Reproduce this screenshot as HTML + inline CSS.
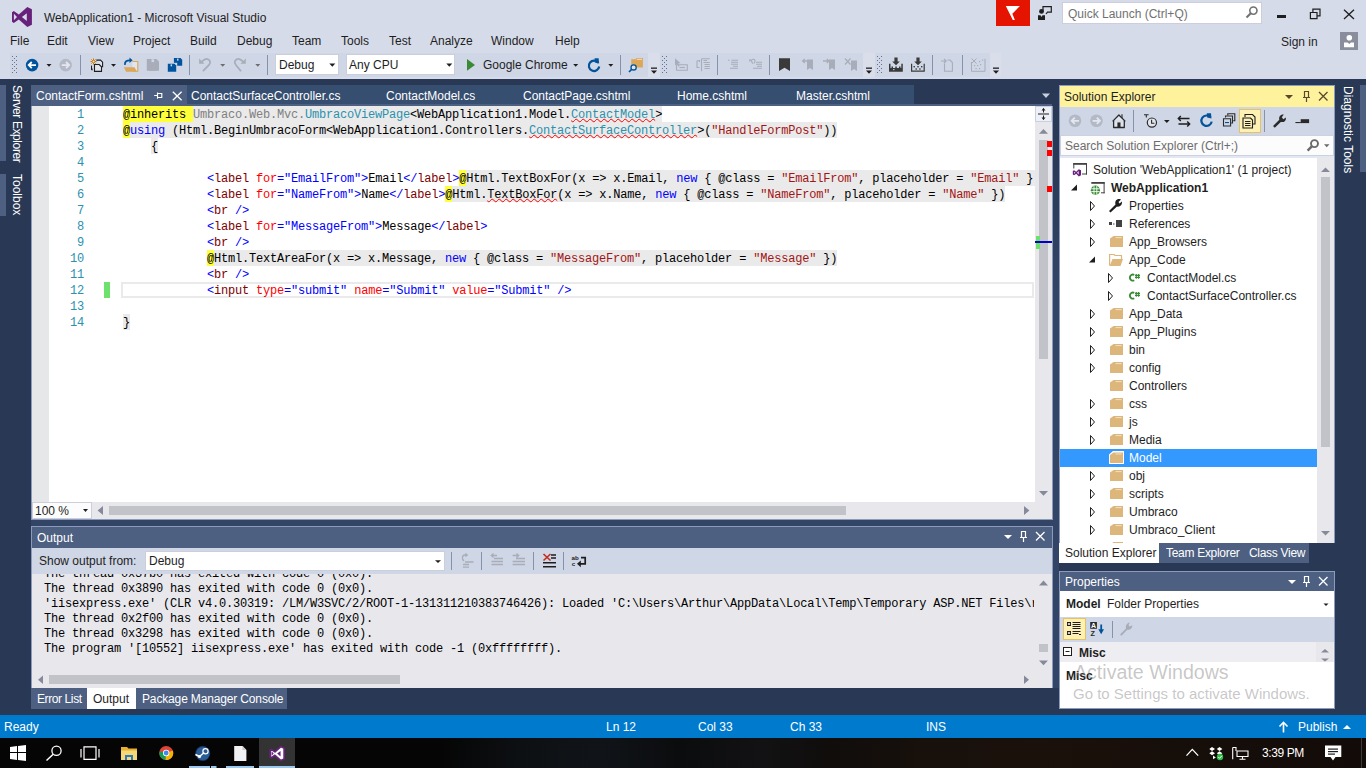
<!DOCTYPE html>
<html><head><meta charset="utf-8">
<style>
*{box-sizing:border-box}
html,body{margin:0;padding:0}
body{width:1366px;height:768px;overflow:hidden;position:relative;background:#293955;font-family:"Liberation Sans",sans-serif;font-size:12px;color:#1e1e1e}
.a{position:absolute;white-space:pre}
.t{position:absolute;white-space:pre;line-height:14px;height:14px}
.m{font-family:"Liberation Mono",monospace;font-size:12px;letter-spacing:-0.2px}
.cl{position:absolute;left:123px;height:16px;line-height:19px;white-space:pre;font-family:"Liberation Mono",monospace;font-size:12px;letter-spacing:-0.2px;color:#000}
.ln{position:absolute;left:56px;width:28px;text-align:right;height:16px;line-height:19px;font-family:"Liberation Mono",monospace;font-size:12px;letter-spacing:-0.2px;color:#2B91AF}
.b{color:#0000ff}.mr{color:#800000}.rd{color:#ff0000}.st{color:#a31515}.ty{color:#2B91AF}.gy{color:#808080}
.y{}
.sq{text-decoration:underline wavy #ff0000;text-decoration-thickness:1px;text-underline-offset:0px}
.ol{position:absolute;left:45px;height:15px;line-height:15px;white-space:pre;font-family:"Liberation Mono",monospace;font-size:12px;letter-spacing:-0.2px;color:#000}
.tr{position:absolute;height:18px;line-height:18px;white-space:pre}
</style></head><body>
<!-- top chrome -->
<div class="a" style="left:0;top:0;width:1366px;height:79px;background:#D6DBE9"></div>

<svg class="a" style="left:0;top:0" width="40" height="32" viewBox="0 0 40 32"><path fill="#68217A" fill-rule="evenodd" d="M27.3 7L31.9 9.3V24.8L27.3 27L18.8 19.4L13.8 22.9L12 21.8V12.2L13.8 11.1L18.8 14.6ZM13.9 13.8L17 17L13.9 20.3ZM26.8 13.2L21.9 17L26.8 21Z"/></svg>
<div class="t" style="left:44px;top:11px;color:#1e1e1e">WebApplication1 - Microsoft Visual Studio</div>
<div class="a" style="left:996px;top:0;width:34px;height:26px;background:#E51400"></div>
<svg class="a" style="left:990px;top:0" width="70" height="30" viewBox="990 0 70 30"><path fill="#fff" d="M1005.8 5.9H1019.9L1012.3 13.8L1014.9 19.9H1012.8Z"/><circle cx="1041.5" cy="11.4" r="2.4" fill="#1e1e1e"/><path fill="#1e1e1e" d="M1038 15.2H1040.5L1041.5 17L1042.5 15.2H1045V19.9H1038Z"/><path fill="none" stroke="#1e1e1e" stroke-width="1.2" d="M1043 11.5V6.6H1051.3V12.1H1047.5L1046 14"/></svg>
<div class="a" style="left:1062px;top:2px;width:200px;height:22px;background:#fff;border:1px solid #CCCEDB"></div>
<div class="t" style="left:1068px;top:7px;color:#717171">Quick Launch (Ctrl+Q)</div>
<svg class="a" style="left:1236px;top:0" width="130" height="56" viewBox="1236 0 130 56"><circle cx="1253.4" cy="10.6" r="3.6" fill="none" stroke="#717171" stroke-width="1.6"/><path stroke="#717171" stroke-width="2" d="M1250.8 13.2L1246.5 17.5"/>
<rect x="1277" y="15" width="9" height="3" fill="#1e1e1e"/>
<path fill="none" stroke="#1e1e1e" stroke-width="1.2" d="M1312.9 12.2V9.1H1320V15.8H1317M1310.4 12.5H1317V18.6H1310.4Z"/>
<path fill="none" stroke="#1e1e1e" stroke-width="1.3" d="M1344 9.8L1354 19M1354 9.8L1344 19"/>
<rect x="1340" y="32" width="18" height="18" fill="#8A8D9B"/><circle cx="1349.3" cy="37.8" r="2.8" fill="#fff"/><path fill="#fff" d="M1344 42.4H1347.5L1349.3 44L1351 42.4H1354V47.2H1344Z"/></svg>
<div class="t" style="left:1281px;top:35px">Sign in</div>

<div class="t" style="left:10px;top:34px">File</div><div class="t" style="left:47px;top:34px">Edit</div><div class="t" style="left:88px;top:34px">View</div><div class="t" style="left:133px;top:34px">Project</div><div class="t" style="left:190px;top:34px">Build</div><div class="t" style="left:237px;top:34px">Debug</div><div class="t" style="left:292px;top:34px">Team</div><div class="t" style="left:341px;top:34px">Tools</div><div class="t" style="left:389px;top:34px">Test</div><div class="t" style="left:430px;top:34px">Analyze</div><div class="t" style="left:491px;top:34px">Window</div><div class="t" style="left:555px;top:34px">Help</div>
<div class="a" style="left:10px;top:53px;width:638px;height:24px;background:#CFD6E5"></div>
<div class="a" style="left:648px;top:53px;width:12px;height:24px;background:#D9DEEA"></div>
<div class="a" style="left:660px;top:53px;width:203px;height:24px;background:#CFD6E5"></div>
<div class="a" style="left:863px;top:53px;width:12px;height:24px;background:#D9DEEA"></div>
<div class="a" style="left:875px;top:53px;width:115px;height:24px;background:#CFD6E5"></div>
<div class="a" style="left:990px;top:53px;width:11px;height:24px;background:#D9DEEA"></div>
<svg class="a" style="left:0;top:48px" width="1010" height="32" viewBox="0 48 1010 32">
<g fill="#64708C"><rect x="12" y="56" width="1" height="1"/><rect x="16" y="56" width="1" height="1"/><rect x="12" y="60" width="1" height="1"/><rect x="16" y="60" width="1" height="1"/><rect x="12" y="64" width="1" height="1"/><rect x="16" y="64" width="1" height="1"/><rect x="12" y="68" width="1" height="1"/><rect x="16" y="68" width="1" height="1"/><rect x="12" y="72" width="1" height="1"/><rect x="16" y="72" width="1" height="1"/><rect x="14" y="58" width="1" height="1"/><rect x="14" y="62" width="1" height="1"/><rect x="14" y="66" width="1" height="1"/><rect x="14" y="70" width="1" height="1"/></g>
<circle cx="32.1" cy="65.1" r="6.3" fill="#00539C"/><path fill="none" stroke="#fff" stroke-width="1.8" d="M36 65.1H29M31.8 62L28.7 65.1L31.8 68.2"/>
<path fill="#1e1e1e" d="M46.5 64H51.5L49.0 66.8Z"/>
<circle cx="65.7" cy="65.1" r="6.3" fill="#B4B9C6"/><path fill="none" stroke="#E4E7EF" stroke-width="1.8" d="M61.8 65.1H68.8M66 62L69.1 65.1L66 68.2"/>
<rect x="80" y="55" width="1" height="20" fill="#8592AC"/>
<path fill="#E0E3EC" stroke="#1e1e1e" stroke-width="1.1" d="M96.3 60.1H100.5L102.6 62.2V67.2"/>
<path fill="#E2E5EE" stroke="#1e1e1e" stroke-width="1.1" d="M94.5 64.5H99.2L101.5 66.8V71.4H94.5Z"/>
<path stroke="#1e1e1e" stroke-width="1" d="M91.5 65.6V69.8H92.6"/>
<g stroke="#CC7A00" stroke-width="1"><path d="M93.5 58.5V64.5M90.5 61.5H96.5M91.4 59.4L95.6 63.6M95.6 59.4L91.4 63.6"/></g><circle cx="93.5" cy="61.5" r="1.3" fill="#E0E3EC" stroke="#CC7A00" stroke-width="0.8"/>
<path fill="#1e1e1e" d="M111 64H116L113.5 66.8Z"/>
<path fill="#E2E5EE" stroke="#DCA758" stroke-width="1.1" d="M132.4 61.5H137.8V71.3H132.4"/>
<path fill="#DCA758" d="M124 67.2H134.5L137 71.8H126Z"/>
<path fill="none" stroke="#00539C" stroke-width="1.8" d="M125 64.8C124.5 61.5 127 60.2 130 60.3"/><path fill="#00539C" d="M129.5 57.5L132.6 60.3L129.5 63Z"/>
<path fill="#A8ADB9" d="M146.8 58.9H156.5L159 61.4V70.7H146.8Z"/><rect x="151.5" y="59.3" width="2.6" height="2.8" fill="#CFD6E5"/><rect x="149" y="65" width="7.8" height="5.7" fill="#A8ADB9"/>
<path fill="#00539C" d="M173.9 58.1H180.5L182.2 59.8V65.7H173.9Z"/><rect x="177" y="58.6" width="1.5" height="2" fill="#CFD6E5"/>
<path fill="#CFD6E5" d="M166.8 62.8H177.2V72.8H166.8Z"/>
<path fill="#00539C" d="M167.8 63.8H174.5L176.2 65.5V71.8H167.8Z"/><rect x="170.6" y="64.3" width="1.5" height="2" fill="#CFD6E5"/>
<rect x="189" y="55" width="1" height="20" fill="#8592AC"/>
<path fill="none" stroke="#A8ADB9" stroke-width="1.8" d="M202.9 71.2L209 65C211.5 62.2 209.5 58.8 206.5 58.8C204.6 58.8 203.2 60.2 201.8 61.6"/><path fill="#A8ADB9" d="M199.1 58.5V63.8H204.5Z"/>
<path fill="#6D6D6D" d="M220.2 64H225.2L222.7 66.8Z"/>
<path fill="none" stroke="#A8ADB9" stroke-width="1.8" d="M241 71.2L235.9 65C233.4 62.2 235.4 58.8 238.4 58.8C240.3 58.8 241.7 60.2 243.1 61.6"/><path fill="#A8ADB9" d="M245.8 58.5V63.8H240.4Z"/>
<path fill="#6D6D6D" d="M255.3 64H260.3L257.8 66.8Z"/>
<rect x="267" y="55" width="1" height="20" fill="#8592AC"/>
<path fill="#388A34" d="M467 59L475 65L467 70.8Z"/>
<path fill="#1e1e1e" d="M573.2 64H578.2L575.7 66.8Z"/>
<path fill="none" stroke="#00539C" stroke-width="2.2" d="M598.3 62.8A5.2 5.2 0 1 0 599.2 66.5"/><path fill="#00539C" d="M594.6 58.2L598.6 58.2L599.1 63.6L594.8 62.5Z"/>
<path fill="#1e1e1e" d="M608.3 64H613.3L610.8 66.8Z"/>
<rect x="620" y="55" width="1" height="20" fill="#8592AC"/>
<path fill="#DCA758" d="M631.2 59.2H635.5L636.5 58H642.9V67.6H631.2Z"/><rect x="636.8" y="58.8" width="5.2" height="1" fill="#F0F0F0" opacity="0.8"/>
<circle cx="633.6" cy="67.4" r="2.6" fill="#E2E5EE" stroke="#00539C" stroke-width="1.3"/><path stroke="#00539C" stroke-width="1.6" d="M631.6 69.4L629 72"/>
<g fill="#1e1e1e"><rect x="651" y="67.5" width="6" height="1.3"/><path d="M651 70.5H657L654 73.8Z"/></g>
<g fill="#64708C"><rect x="662" y="56" width="1" height="1"/><rect x="666" y="56" width="1" height="1"/><rect x="662" y="60" width="1" height="1"/><rect x="666" y="60" width="1" height="1"/><rect x="662" y="64" width="1" height="1"/><rect x="666" y="64" width="1" height="1"/><rect x="662" y="68" width="1" height="1"/><rect x="666" y="68" width="1" height="1"/><rect x="662" y="72" width="1" height="1"/><rect x="666" y="72" width="1" height="1"/><rect x="664" y="58" width="1" height="1"/><rect x="664" y="62" width="1" height="1"/><rect x="664" y="66" width="1" height="1"/><rect x="664" y="70" width="1" height="1"/></g>
<g fill="none" stroke="#A8ADB9" stroke-width="1.1"><path d="M676.5 64.8H687.3V70.2H676.5Z" /><path d="M679.5 67.5H685"/></g><path fill="#A8ADB9" d="M675 58.2V65.5L677 63.8L678.5 66.8L679.5 66.3L678.2 63.3H680.6Z"/>
<g fill="none" stroke="#A8ADB9" stroke-width="1.1"><path d="M701.5 58.8V71.2M701.5 58.8H709.8M703.5 60.5H707M703.5 62.5H709.8M704.5 64.5H709.8M704.5 66.5H709.8M704.5 68.5H709.8M697 60.8V67.5H699.5M697 60.8H699.5M699.5 60V62"/></g>
<rect x="717" y="55" width="1" height="20" fill="#8592AC"/>
<g fill="none" stroke="#A8ADB9" stroke-width="1.1"><path d="M728 60.3H729.5M731.5 60.3H738M731 62.3H738M731 64.3H738M733 66.3H738M730 68.3H738"/></g>
<g fill="none" stroke="#A8ADB9" stroke-width="1.1"><path d="M753 63.5C751 62 751 59 753.5 59.2C755.5 59.4 755.5 61.5 753.8 63.5M756 62.3H762M756 64.3H762M757 66.3H762M753 68.3H762"/></g><path fill="#A8ADB9" d="M749.3 59V62L752 60Z"/>
<rect x="769" y="55" width="1" height="20" fill="#8592AC"/>
<path fill="#3A3A3A" d="M779 58.2H790V71L784.5 67.8L779 71Z"/>
<path fill="#A8ADB9" d="M807 59.5H813V70L810 68L807 70Z"/><path fill="none" stroke="#A8ADB9" stroke-width="1.3" d="M808.5 61H802.8M804.8 59L802.6 61L804.8 63"/>
<path fill="#A8ADB9" d="M829 59.5H835V70L832 68L829 70Z"/><path fill="none" stroke="#A8ADB9" stroke-width="1.3" d="M823 61H828.8M826.8 59L829 61L826.8 63"/>
<path fill="#A8ADB9" d="M851 60.5H857V71L854 69L851 71Z"/><path fill="none" stroke="#A8ADB9" stroke-width="1.3" d="M845 58.5L850.5 64.5M850.5 58.5L845 64.5"/>
<g fill="#1e1e1e"><rect x="866" y="67.5" width="6" height="1.3"/><path d="M866 70.5H872L869 73.8Z"/></g>
<g fill="#64708C"><rect x="877" y="56" width="1" height="1"/><rect x="881" y="56" width="1" height="1"/><rect x="877" y="60" width="1" height="1"/><rect x="881" y="60" width="1" height="1"/><rect x="877" y="64" width="1" height="1"/><rect x="881" y="64" width="1" height="1"/><rect x="877" y="68" width="1" height="1"/><rect x="881" y="68" width="1" height="1"/><rect x="877" y="72" width="1" height="1"/><rect x="881" y="72" width="1" height="1"/><rect x="879" y="58" width="1" height="1"/><rect x="879" y="62" width="1" height="1"/><rect x="879" y="66" width="1" height="1"/><rect x="879" y="70" width="1" height="1"/></g>
<g fill="#3A3A3A"><path d="M894.4 57.5H897.6V61.5H899.8L896 65.3L892.2 61.5H894.4Z"/><path d="M889 63.8H890.5V68H901.3V63.8H902.8V71.8H889Z"/><rect x="891.5" y="66.5" width="1.5" height="1.5"/><rect x="895.3" y="66.5" width="1.5" height="1.5"/><rect x="899" y="66.5" width="1.5" height="1.5"/><rect x="893.2" y="69" width="1.2" height="1.2" fill="#CFD6E5"/></g>
<g fill="#3A3A3A"><path d="M916.4 57.5H919.6V61.5H921.8L918 65.3L914.2 61.5H916.4Z"/><path d="M911 63.8H912.2V70.6H923.6V63.8H924.8V71.8H911Z"/><rect x="913.5" y="66" width="1.4" height="1.4"/><rect x="917.3" y="66" width="1.4" height="1.4"/><rect x="921" y="66" width="1.4" height="1.4"/><rect x="915.5" y="68.3" width="1.4" height="1.4"/><rect x="919.2" y="68.3" width="1.4" height="1.4"/></g>
<rect x="932" y="55" width="1" height="20" fill="#8592AC"/>
<g fill="none" stroke="#A8ADB9" stroke-width="1.1"><path d="M944.5 63.5V71.2H952.4V62.5L950 60H947.5"/><path d="M941 61H946M944 59L946.2 61L944 63"/></g>
<rect x="962" y="55" width="1" height="20" fill="#8592AC"/>
<g fill="none" stroke="#A8ADB9" stroke-width="1"><path d="M971.5 62V71.3H985V58.8"/><path d="M971.5 58.5L976.5 63.5M976.5 58.5L971.5 63.5"/></g><g fill="#A8ADB9"><rect x="979" y="61" width="1.2" height="1.2"/><rect x="982" y="59.5" width="1.2" height="1.2"/><rect x="974" y="65" width="1.2" height="1.2"/><rect x="977" y="65" width="1.2" height="1.2"/><rect x="980" y="64" width="1.2" height="1.2"/><rect x="975.5" y="68" width="1.2" height="1.2"/><rect x="979" y="68" width="1.2" height="1.2"/></g>
<g fill="#1e1e1e"><rect x="993" y="67.5" width="6" height="1.3"/><path d="M993 70.5H999L996 73.8Z"/></g>
</svg>
<div class="a" style="left:275px;top:54px;width:64px;height:21px;background:#fff;border:1px solid #CCCEDB"></div>
<div class="t" style="left:279px;top:58px">Debug</div><svg class="a" style="left:329px;top:63px" width="7" height="5"><path fill="#1e1e1e" d="M0.3 0.5H6.3L3.3 3.8Z"/></svg>
<div class="a" style="left:346px;top:54px;width:109px;height:21px;background:#fff;border:1px solid #CCCEDB"></div>
<div class="t" style="left:349px;top:58px">Any CPU</div><svg class="a" style="left:446px;top:63px" width="7" height="5"><path fill="#1e1e1e" d="M0.3 0.5H6.3L3.3 3.8Z"/></svg>
<div class="t" style="left:483px;top:58px">Google Chrome</div>

<div class="a" style="left:0;top:85px;width:6px;height:76px;background:#4D6082"></div>
<div class="a" style="left:0;top:174px;width:6px;height:42px;background:#4D6082"></div>
<div class="a" style="left:11px;top:85px;width:14px;height:76px;"><div class="t" style="left:0;top:0;transform-origin:0 0;transform:translate(13px,0) rotate(90deg);color:#fff;letter-spacing:-0.4px">Server Explorer</div></div>
<div class="a" style="left:11px;top:174px;width:14px;height:42px;"><div class="t" style="left:0;top:0;transform-origin:0 0;transform:translate(13px,0) rotate(90deg);color:#fff">Toolbox</div></div>
<div class="a" style="left:1360px;top:85px;width:6px;height:87px;background:#4D6082"></div>
<div class="a" style="left:1342px;top:86px;width:14px;height:87px;"><div class="t" style="left:0;top:0;transform-origin:0 0;transform:translate(13px,0) rotate(90deg);color:#fff">Diagnostic Tools</div></div>

<div class="a" style="left:31px;top:85px;width:156px;height:21px;background:#4D6082"></div>
<div class="a" style="left:187px;top:85px;width:727px;height:19px;background:#364E6F"></div>
<div class="a" style="left:31px;top:104px;width:1021px;height:2px;background:#4D6082"></div>
<div class="t" style="left:36px;top:89px;color:#fff">ContactForm.cshtml</div>
<svg class="a" style="left:150px;top:88px" width="36" height="16" viewBox="150 88 36 16"><path fill="none" stroke="#fff" stroke-width="1.1" d="M154.2 95.5H157.5M157.5 92.4V98.7M157.5 93.5H161.8V97.5H157.5"/><path fill="none" stroke="#fff" stroke-width="1.3" d="M172.8 91.8L181.6 100.2M181.6 91.8L172.8 100.2"/></svg>
<div class="t" style="left:191px;top:89px;color:#fff">ContactSurfaceController.cs</div>
<div class="t" style="left:386px;top:89px;color:#fff">ContactModel.cs</div>
<div class="t" style="left:523px;top:89px;color:#fff">ContactPage.cshtml</div>
<div class="t" style="left:677px;top:89px;color:#fff">Home.cshtml</div>
<div class="t" style="left:796px;top:89px;color:#fff">Master.cshtml</div>
<svg class="a" style="left:1040px;top:92px" width="12" height="8"><path fill="#C9CEDB" d="M2 1.5H10L6 6Z"/></svg>
<div class="a" style="left:31px;top:106px;width:1021px;height:413px;background:#fff"></div>
<div class="a" style="left:31px;top:106px;width:18px;height:396px;background:#E6E7E8"></div>
<div class="a" style="left:123px;top:106px;width:70px;height:16px;background:#FFFF3A"></div>
<div class="a" style="left:193px;top:106px;width:469px;height:16px;background:#EAEAEA"></div>
<div class="a" style="left:123px;top:122px;width:7px;height:16px;background:#FFFF3A"></div>
<div class="a" style="left:130px;top:122px;width:707px;height:16px;background:#EAEAEA"></div>
<div class="a" style="left:151px;top:138px;width:7px;height:16px;background:#EAEAEA"></div>
<div class="a" style="left:459px;top:170px;width:7px;height:16px;background:#FFFF3A"></div>
<div class="a" style="left:466px;top:170px;width:569px;height:16px;background:#EAEAEA"></div>
<div class="a" style="left:445px;top:186px;width:7px;height:16px;background:#FFFF3A"></div>
<div class="a" style="left:452px;top:186px;width:553px;height:16px;background:#EAEAEA"></div>
<div class="a" style="left:207px;top:250px;width:7px;height:16px;background:#FFFF3A"></div>
<div class="a" style="left:214px;top:250px;width:623px;height:16px;background:#EAEAEA"></div>
<div class="a" style="left:123px;top:314px;width:7px;height:16px;background:#EAEAEA"></div>
<div class="a" style="left:121px;top:282px;width:913px;height:16px;border:2px solid #EAEAEA"></div>
<div class="a" style="left:104px;top:282px;width:6px;height:16px;background:#6CE26C"></div>
<div class="ln" style="top:106px">1</div>
<div class="ln" style="top:122px">2</div>
<div class="ln" style="top:138px">3</div>
<div class="ln" style="top:154px">4</div>
<div class="ln" style="top:170px">5</div>
<div class="ln" style="top:186px">6</div>
<div class="ln" style="top:202px">7</div>
<div class="ln" style="top:218px">8</div>
<div class="ln" style="top:234px">9</div>
<div class="ln" style="top:250px">10</div>
<div class="ln" style="top:266px">11</div>
<div class="ln" style="top:282px">12</div>
<div class="ln" style="top:298px">13</div>
<div class="ln" style="top:314px">14</div>
<div class="a" style="left:123px;top:106px;width:912px;height:396px;overflow:hidden">
<div class="cl" style="left:0;top:0px">@inherits <span class="gy">Umbraco.Web.Mvc.</span><span class="ty">UmbracoViewPage</span>&lt;WebApplication1.Model.<span class="ty sq">ContactModel</span>&gt;</div>
<div class="cl" style="left:0;top:16px">@<span class="b">using</span> (Html.BeginUmbracoForm&lt;WebApplication1.Controllers.<span class="ty sq">ContactSurfaceController</span>&gt;(<span class="st">"HandleFormPost"</span>))</div>
<div class="cl" style="left:0;top:32px">    {</div>
<div class="cl" style="left:0;top:64px">            <span class="b">&lt;</span><span class="mr">label</span> <span class="rd">for</span><span class="b">=</span><span class="b">"EmailFrom"</span><span class="b">&gt;</span>Email<span class="b">&lt;/</span><span class="mr">label</span><span class="b">&gt;</span>@Html.TextBoxFor(x =&gt; x.Email, <span class="b">new</span> { @class = <span class="st">"EmailFrom"</span>, placeholder = <span class="st">"Email"</span> })</div>
<div class="cl" style="left:0;top:80px">            <span class="b">&lt;</span><span class="mr">label</span> <span class="rd">for</span><span class="b">=</span><span class="b">"NameFrom"</span><span class="b">&gt;</span>Name<span class="b">&lt;/</span><span class="mr">label</span><span class="b">&gt;</span>@Html.<span class="sq">TextBoxFor</span>(x =&gt; x.Name, <span class="b">new</span> { @class = <span class="st">"NameFrom"</span>, placeholder = <span class="st">"Name"</span> })</div>
<div class="cl" style="left:0;top:96px">            <span class="b">&lt;</span><span class="mr">br</span><span class="b"> /&gt;</span></div>
<div class="cl" style="left:0;top:112px">            <span class="b">&lt;</span><span class="mr">label</span> <span class="rd">for</span><span class="b">=</span><span class="b">"MessageFrom"</span><span class="b">&gt;</span>Message<span class="b">&lt;/</span><span class="mr">label</span><span class="b">&gt;</span></div>
<div class="cl" style="left:0;top:128px">            <span class="b">&lt;</span><span class="mr">br</span><span class="b"> /&gt;</span></div>
<div class="cl" style="left:0;top:144px">            @Html.TextAreaFor(x =&gt; x.Message, <span class="b">new</span> { @class = <span class="st">"MessageFrom"</span>, placeholder = <span class="st">"Message"</span> })</div>
<div class="cl" style="left:0;top:160px">            <span class="b">&lt;</span><span class="mr">br</span><span class="b"> /&gt;</span></div>
<div class="cl" style="left:0;top:176px">            <span class="b">&lt;</span><span class="mr">input</span> <span class="rd">type</span><span class="b">=</span><span class="b">"submit"</span> <span class="rd">name</span><span class="b">=</span><span class="b">"Submit"</span> <span class="rd">value</span><span class="b">=</span><span class="b">"Submit"</span><span class="b"> /&gt;</span></div>
<div class="cl" style="left:0;top:208px">}</div>
</div>
<div class="a" style="left:1035px;top:106px;width:17px;height:396px;background:#E8E8EC"></div>
<div class="a" style="left:1035px;top:106px;width:17px;height:16px;background:#EEF0F8;border:1px solid #C9D0E2"></div>
<svg class="a" style="left:1035px;top:106px" width="17" height="16"><path fill="none" stroke="#1e1e1e" stroke-width="1" d="M3 8H14M8.5 2.5V6.5M8.5 9.5V13.5"/><path fill="#1e1e1e" d="M6.5 4.5L8.5 2L10.5 4.5ZM6.5 11.5L8.5 14L10.5 11.5Z"/></svg>
<svg class="a" style="left:1035px;top:122px" width="17" height="380" viewBox="1035 122 17 380"><path fill="#868999" d="M1039 133.8L1043.5 129L1048 133.8Z"/><path fill="#868999" d="M1039 491L1043.5 495.8L1048 491Z"/></svg>
<div class="a" style="left:1039px;top:140px;width:9px;height:219px;background:#C2C3C9"></div>
<div class="a" style="left:1047px;top:141px;width:5px;height:6px;background:#ff0000"></div>
<div class="a" style="left:1047px;top:150px;width:5px;height:6px;background:#ff0000"></div>
<div class="a" style="left:1047px;top:186px;width:5px;height:6px;background:#ff0000"></div>
<div class="a" style="left:1036px;top:236px;width:4px;height:13px;background:#6CE26C"></div>
<div class="a" style="left:1035px;top:241px;width:17px;height:2px;background:#0000CD"></div>
<div class="a" style="left:31px;top:502px;width:1021px;height:17px;background:#E8E8EC"></div>
<div class="a" style="left:31px;top:106px;width:1px;height:414px;background:#8C9BB9"></div>
<div class="a" style="left:1052px;top:106px;width:1px;height:414px;background:#8C9BB9"></div>
<div class="a" style="left:31px;top:519px;width:1022px;height:1px;background:#8C9BB9"></div>

<div class="a" style="left:32px;top:502px;width:60px;height:17px;background:#FCFCFC;border:1px solid #CCCEDB"></div>
<div class="t" style="left:35px;top:504px">100 %</div>
<svg class="a" style="left:80px;top:507px" width="10" height="8"><path fill="#1e1e1e" d="M3 2H8L5.5 5Z"/></svg>
<svg class="a" style="left:95px;top:502px" width="940" height="17" viewBox="95 502 940 17"><path fill="#868999" d="M103 506L97.6 510.5L103 515Z"/><path fill="#868999" d="M1024 506L1029.4 510.5L1024 515Z"/></svg>
<div class="a" style="left:109px;top:506px;width:737px;height:9px;background:#C2C3C9"></div>
<div class="a" style="left:31px;top:520px;width:1022px;height:6px;background:#334567"></div>
<div class="a" style="left:1053px;top:150px;width:6px;height:538px;background:linear-gradient(180deg,#293955 0px,#334567 150px,#334567 100%)"></div>
<div class="a" style="left:31px;top:526px;width:1022px;height:162px;background:#E8E8EC;border:1px solid #8C9BB9;border-bottom:none"></div>
<div class="a" style="left:32px;top:527px;width:1020px;height:21px;background:#4D6082"></div>
<div class="t" style="left:37px;top:531px;color:#fff">Output</div>
<svg class="a" style="left:1002px;top:530px" width="50" height="14" viewBox="1002 530 50 14"><path fill="#fff" d="M1004 535H1012L1008 539Z"/><path fill="none" stroke="#fff" stroke-width="1.2" d="M1021.5 531.5H1025.5V537.5H1021.5Z M1020 537.5H1027M1023.5 537.5V542"/><path fill="none" stroke="#fff" stroke-width="1.3" d="M1036 532L1044.5 540.5M1044.5 532L1036 540.5"/></svg>
<div class="a" style="left:32px;top:548px;width:1020px;height:26px;background:#CFD6E5"></div>
<div class="t" style="left:39px;top:554px">Show output from:</div>
<div class="a" style="left:145px;top:551px;width:300px;height:20px;background:#fff;border:1px solid #CCCEDB"></div>
<div class="t" style="left:149px;top:554px">Debug</div>
<svg class="a" style="left:430px;top:550px" width="170" height="24" viewBox="430 550 170 24">
<path fill="#1e1e1e" d="M435 560.2H441L438 563Z"/>
<g fill="#8592AC"><rect x="451" y="552" width="1" height="18"/><rect x="481" y="552" width="1" height="18"/><rect x="533" y="552" width="1" height="18"/><rect x="563" y="552" width="1" height="18"/></g>
<g fill="none" stroke="#A8ADB9" stroke-width="1.3"><path d="M464 561C461.5 559 462 555 465 555L467 555M465.5 553.5L467.2 555L465.5 556.6M465 562H473.5M463 564.5H469M463 567.2H469"/>
<path d="M497 555.5H491.5M493.5 553.5L491.3 555.5L493.5 557.5M494 558.5H503M491.5 561.5H503M491.5 564.5H503"/>
<path d="M512.6 555.5H518.5M516.5 553.5L518.7 555.5L516.5 557.5M516 558.5H525M512.6 561.5H525M512.6 564.5H525"/></g>
<g fill="none" stroke="#1e1e1e" stroke-width="1.6"><path d="M551 555H556M551 558H556M543 562.8H556M543 566.7H556"/></g><path fill="none" stroke="#C42B1C" stroke-width="1.6" d="M543.5 554L550.5 560.5M550.5 554L543.5 560.5"/>
<g fill="#1e1e1e" font-family="Liberation Sans" font-size="6.2" font-weight="bold"><text x="571.6" y="560">ab</text><text x="571.8" y="566">c</text></g>
<path fill="none" stroke="#1e1e1e" stroke-width="1.7" d="M581 557.6H585.2V563.8H579.5"/><path fill="#1e1e1e" d="M580.8 560.4L577 563.8L580.8 567.2Z"/>
</svg>
<div class="a" style="left:32px;top:574px;width:1003px;height:100px;overflow:hidden"><div class="a" style="left:-1px;top:2px;width:1003px;height:100px">
<div class="ol" style="left:13px;top:-9px;width:990px;overflow:hidden">The thread 0x37b0 has exited with code 0 (0x0).</div>
<div class="ol" style="left:13px;top:6px;width:990px;overflow:hidden">The thread 0x3890 has exited with code 0 (0x0).</div>
<div class="ol" style="left:13px;top:21px;width:990px;overflow:hidden">'iisexpress.exe' (CLR v4.0.30319: /LM/W3SVC/2/ROOT-1-131311210383746426): Loaded 'C:\Users\Arthur\AppData\Local\Temp\Temporary ASP.NET Files\root\</div>
<div class="ol" style="left:13px;top:36px;width:990px;overflow:hidden">The thread 0x2f00 has exited with code 0 (0x0).</div>
<div class="ol" style="left:13px;top:51px;width:990px;overflow:hidden">The thread 0x3298 has exited with code 0 (0x0).</div>
<div class="ol" style="left:13px;top:66px;width:990px;overflow:hidden">The program '[10552] iisexpress.exe' has exited with code -1 (0xffffffff).</div>
</div></div>
<svg class="a" style="left:32px;top:574px" width="1020" height="114" viewBox="32 574 1020 114">
<path fill="#868999" d="M1039 585.4L1043.5 580.6L1048 585.4Z"/><rect x="1039" y="644" width="9" height="8" fill="#C2C3C9"/><path fill="#868999" d="M1039 660.5L1043.5 665.3L1048 660.5Z"/>
<path fill="#868999" d="M43 675.5L38 679.8L43 684Z"/><path fill="#868999" d="M1024 675.5L1029 679.8L1024 684Z"/>
<rect x="49" y="675" width="351" height="9" fill="#C2C3C9"/></svg>
<div class="a" style="left:31px;top:688px;width:56px;height:21px;background:#4D6082"></div>
<div class="a" style="left:87px;top:688px;width:49px;height:21px;background:#fff"></div>
<div class="a" style="left:136px;top:688px;width:151px;height:21px;background:#4D6082"></div>
<div class="t" style="left:37px;top:692px;color:#fff;letter-spacing:-0.4px">Error List</div>
<div class="t" style="left:93px;top:692px;color:#1e1e1e">Output</div>
<div class="t" style="left:142px;top:692px;color:#fff;letter-spacing:-0.15px">Package Manager Console</div>
<div class="a" style="left:1059px;top:85px;width:276px;height:478px;background:#fff;border:1px solid #8C9BB9;border-bottom:none"></div>
<div class="a" style="left:1060px;top:86px;width:274px;height:21px;background:#FFF29D"></div>
<div class="t" style="left:1064px;top:90px;color:#1e1e1e">Solution Explorer</div>
<svg class="a" style="left:1283px;top:90px" width="50" height="14" viewBox="1283 91 50 14"><path fill="#574A2C" d="M1285 96H1293L1289 100Z"/><path fill="none" stroke="#574A2C" stroke-width="1.2" d="M1304.5 92.5H1308.5V98.5H1304.5Z M1303 98.5H1310M1306.5 98.5V103"/><path fill="none" stroke="#574A2C" stroke-width="1.3" d="M1319 93L1327.5 101.5M1327.5 93L1319 101.5"/></svg>
<div class="a" style="left:1060px;top:107px;width:274px;height:29px;background:#CFD6E5"></div>
<svg class="a" style="left:1060px;top:107px" width="274" height="29" viewBox="1060 107 274 29">
<circle cx="1075" cy="120.8" r="6.3" fill="#B4B9C6"/><path fill="none" stroke="#E4E7EF" stroke-width="1.8" d="M1079 120.8H1072M1074.8 117.7L1071.7 120.8L1074.8 123.9"/>
<circle cx="1096.5" cy="120.8" r="6.3" fill="#B4B9C6"/><path fill="none" stroke="#E4E7EF" stroke-width="1.8" d="M1092.6 120.8H1099.6M1096.8 117.7L1099.9 120.8L1096.8 123.9"/>
<path fill="#E2E5EE" stroke="#2a2a2a" stroke-width="1.3" stroke-linejoin="round" d="M1112.6 121.4L1118.9 115L1125.3 121.4M1113.6 120.5V127.5H1124.3V120.5"/><path stroke="#2a2a2a" stroke-width="1.1" d="M1122 114.2V118"/><rect x="1117.4" y="122.4" width="3.1" height="5.3" fill="#2a2a2a"/>
<rect x="1133" y="110" width="1" height="22" fill="#8592AC"/>
<circle cx="1151.9" cy="122.6" r="4.6" fill="#E2E5EE" stroke="#2a2a2a" stroke-width="1.2"/><path fill="none" stroke="#2a2a2a" stroke-width="1.1" d="M1151.6 119.8V123.2H1154.4M1144 114.8H1148.6M1146.3 114.8V117.5"/>
<path fill="#1e1e1e" d="M1164 120H1169.6L1166.8 123Z"/>
<g fill="none" stroke="#1e1e1e" stroke-width="1.4"><path d="M1178.5 118.5H1189.5M1180.8 116L1178.3 118.5L1180.8 121M1178.5 124H1189.5M1187.2 121.5L1189.7 124L1187.2 126.5"/></g>
<path fill="none" stroke="#00539C" stroke-width="2.2" d="M1210.5 117.3A5.2 5.2 0 1 0 1211.7 121.6"/><path fill="#00539C" d="M1206.8 113.2L1211 113.3L1211.5 118.6L1207.2 117.6Z"/>
<g fill="none" stroke="#2a2a2a" stroke-width="1.1"><path d="M1225.5 117.5V116H1232.5V123H1231.2M1227.8 115.3V113.8H1234.8V120.8H1233.2"/><path d="M1223.5 118.8H1230.6V126H1223.5Z"/></g><rect x="1225" y="122" width="4" height="1.1" fill="#00539C"/>
<rect x="1239.5" y="109.5" width="21" height="23" fill="#FFF0B3" stroke="#E5C365" stroke-width="1"/>
<g fill="none" stroke="#1e1e1e" stroke-width="1.1"><path d="M1245 117V114.5H1252.5L1255 117V124H1252"/><path d="M1243 118H1250.5L1252.5 120V128H1243Z"/><path d="M1245 121.5H1250.5M1245 123.5H1250.5M1245 125.5H1250.5"/></g>
<rect x="1264" y="110" width="1" height="22" fill="#8592AC"/>
<path fill="#2a2a2a" d="M1273 126L1279.3 119.7C1278.5 117 1280.5 114.2 1283.8 114.6L1281.8 117.2L1283.3 119.2L1285.9 117.4C1286.4 120.8 1283.5 122.8 1280.8 121.9L1274.8 127.8Z"/>
<rect x="1295.4" y="122" width="5.4" height="1.1" fill="#2a2a2a"/><rect x="1300.7" y="119.2" width="8.4" height="3.9" fill="#2a2a2a"/>
</svg>
<div class="a" style="left:1060px;top:136px;width:274px;height:22px;background:#E3E7F1"></div>
<div class="a" style="left:1060px;top:135px;width:274px;height:21px;background:#fcfcfc;border:1px solid #CCD1E0"></div>
<div class="t" style="left:1065px;top:139px;color:#6D6D6D">Search Solution Explorer (Ctrl+;)</div>
<svg class="a" style="left:1300px;top:136px" width="34" height="20" viewBox="1300 136 34 20"><circle cx="1314.5" cy="143.6" r="3.5" fill="none" stroke="#6A6A6A" stroke-width="1.9"/><path stroke="#6A6A6A" stroke-width="2.4" d="M1311.8 146.3L1307.6 150.6"/><path fill="#6A6A6A" d="M1324 144.2H1329.5L1326.75 147.2Z"/></svg>
<div class="a" style="left:1060px;top:158px;width:257px;height:385px;overflow:hidden">
<div class="a" style="left:0;top:291px;width:257px;height:18px;background:#3399FF"></div>
<div class="t" style="left:33px;top:5px;color:#1e1e1e">Solution 'WebApplication1' (1 project)</div>
<div class="t" style="left:51px;top:23px;color:#1e1e1e;font-weight:bold">WebApplication1</div>
<div class="t" style="left:69px;top:41px;color:#1e1e1e">Properties</div>
<div class="t" style="left:69px;top:59px;color:#1e1e1e">References</div>
<div class="t" style="left:69px;top:77px;color:#1e1e1e">App_Browsers</div>
<div class="t" style="left:69px;top:95px;color:#1e1e1e">App_Code</div>
<div class="t" style="left:87px;top:113px;color:#1e1e1e">ContactModel.cs</div>
<div class="t" style="left:87px;top:131px;color:#1e1e1e">ContactSurfaceController.cs</div>
<div class="t" style="left:69px;top:149px;color:#1e1e1e">App_Data</div>
<div class="t" style="left:69px;top:167px;color:#1e1e1e">App_Plugins</div>
<div class="t" style="left:69px;top:185px;color:#1e1e1e">bin</div>
<div class="t" style="left:69px;top:203px;color:#1e1e1e">config</div>
<div class="t" style="left:69px;top:221px;color:#1e1e1e">Controllers</div>
<div class="t" style="left:69px;top:239px;color:#1e1e1e">css</div>
<div class="t" style="left:69px;top:257px;color:#1e1e1e">js</div>
<div class="t" style="left:69px;top:275px;color:#1e1e1e">Media</div>
<div class="t" style="left:69px;top:293px;color:#fff">Model</div>
<div class="t" style="left:69px;top:311px;color:#1e1e1e">obj</div>
<div class="t" style="left:69px;top:329px;color:#1e1e1e">scripts</div>
<div class="t" style="left:69px;top:347px;color:#1e1e1e">Umbraco</div>
<div class="t" style="left:69px;top:365px;color:#1e1e1e">Umbraco_Client</div>
<svg class="a" style="left:0;top:0" width="257" height="385" viewBox="1060 158 257 385"><g fill="#424242"><rect x="1073.3" y="163" width="13.7" height="1.8"/><rect x="1073.3" y="163" width="1" height="6.5"/><rect x="1086" y="163" width="1" height="11.5"/><rect x="1082" y="173.5" width="5" height="1"/></g><rect x="1072.5" y="168.5" width="9.5" height="8.5" fill="#fff"/><path fill="#68217A" fill-rule="evenodd" d="M1078.8 169.2L1081 170.3V175.3L1078.8 176.4L1076.2 173.8L1074 175.3L1072.8 174.6V171L1074 170.3L1076.2 171.8ZM1074.2 171.8L1075.4 172.8L1074.2 173.8ZM1078.6 171L1077.1 172.8L1078.6 174.6Z"/><path fill="#1e1e1e" d="M1077 184.5V190.5H1071Z"/><g fill="#424242"><rect x="1091.3" y="182" width="13.3" height="1.8"/><rect x="1103.6" y="182" width="1" height="11.3"/><rect x="1101" y="192.3" width="3.6" height="1"/></g><circle cx="1095.4" cy="190.2" r="5.2" fill="#fff"/><circle cx="1095.4" cy="190.2" r="4.6" fill="#388A34"/><path fill="none" stroke="#fff" stroke-width="0.9" d="M1091.2 188.8H1099.6M1091.2 191.6H1099.6M1094 185.8V194.6M1096.8 185.8V194.6"/><path fill="none" stroke="#1e1e1e" stroke-width="1" d="M1090.5 201.5L1094.5 206L1090.5 210.5Z"/><path fill="#1e1e1e" d="M1109 211L1115.5 204.5C1114.5 201 1117 198 1121 199.5L1118.5 202L1119.5 203.5L1122 201.5C1122.5 205 1119.5 207.5 1117 206.5L1110.5 212.5Z"/><path fill="none" stroke="#1e1e1e" stroke-width="1" d="M1090.5 219.5L1094.5 224L1090.5 228.5Z"/><rect x="1109" y="222" width="3" height="3" fill="#424242"/><rect x="1113" y="223.5" width="1.5" height="1" fill="#424242"/><rect x="1116" y="220" width="6" height="7" fill="#424242"/><path fill="none" stroke="#1e1e1e" stroke-width="1" d="M1090.5 237.5L1094.5 242L1090.5 246.5Z"/><path fill="#DCB67A" d="M1110.0 238.5L1113.5 236.0H1123.0V247.0H1110.0Z"/><rect x="1115.5" y="237.2" width="6.2" height="0.9" fill="#F5E6C8"/><path fill="#1e1e1e" d="M1095 256.5V262.5H1089Z"/><path fill="none" stroke="#DCB67A" stroke-width="1.2" d="M1109.6 265.5V254.5H1114L1115 255.5H1121.5V259"/><path fill="#DCB67A" d="M1109.6 266L1112.5 259H1123L1120.5 266Z"/><path fill="none" stroke="#1e1e1e" stroke-width="1" d="M1108.5 273.5L1112.5 278L1108.5 282.5Z"/><path fill="none" stroke="#388A34" stroke-width="1.9" d="M1134.2 275.0A2.9 3 0 1 0 1134.2 280.2"/><path fill="none" stroke="#388A34" stroke-width="1.1" d="M1136.3 274.0V278.8M1138.6 274.0V278.8M1135.0 275.4H1140.0M1135.0 277.4H1140.0"/><path fill="none" stroke="#1e1e1e" stroke-width="1" d="M1108.5 291.5L1112.5 296L1108.5 300.5Z"/><path fill="none" stroke="#388A34" stroke-width="1.9" d="M1134.2 293.0A2.9 3 0 1 0 1134.2 298.2"/><path fill="none" stroke="#388A34" stroke-width="1.1" d="M1136.3 292.0V296.8M1138.6 292.0V296.8M1135.0 293.4H1140.0M1135.0 295.4H1140.0"/><path fill="none" stroke="#1e1e1e" stroke-width="1" d="M1090.5 309.5L1094.5 314L1090.5 318.5Z"/><path fill="#DCB67A" d="M1110.0 310.5L1113.5 308.0H1123.0V319.0H1110.0Z"/><rect x="1115.5" y="309.2" width="6.2" height="0.9" fill="#F5E6C8"/><path fill="none" stroke="#1e1e1e" stroke-width="1" d="M1090.5 327.5L1094.5 332L1090.5 336.5Z"/><path fill="#DCB67A" d="M1110.0 328.5L1113.5 326.0H1123.0V337.0H1110.0Z"/><rect x="1115.5" y="327.2" width="6.2" height="0.9" fill="#F5E6C8"/><path fill="none" stroke="#1e1e1e" stroke-width="1" d="M1090.5 345.5L1094.5 350L1090.5 354.5Z"/><path fill="#DCB67A" d="M1110.0 346.5L1113.5 344.0H1123.0V355.0H1110.0Z"/><rect x="1115.5" y="345.2" width="6.2" height="0.9" fill="#F5E6C8"/><path fill="none" stroke="#1e1e1e" stroke-width="1" d="M1090.5 363.5L1094.5 368L1090.5 372.5Z"/><path fill="#DCB67A" d="M1110.0 364.5L1113.5 362.0H1123.0V373.0H1110.0Z"/><rect x="1115.5" y="363.2" width="6.2" height="0.9" fill="#F5E6C8"/><path fill="#DCB67A" d="M1110.0 382.5L1113.5 380.0H1123.0V391.0H1110.0Z"/><rect x="1115.5" y="381.2" width="6.2" height="0.9" fill="#F5E6C8"/><path fill="none" stroke="#1e1e1e" stroke-width="1" d="M1090.5 399.5L1094.5 404L1090.5 408.5Z"/><path fill="#DCB67A" d="M1110.0 400.5L1113.5 398.0H1123.0V409.0H1110.0Z"/><rect x="1115.5" y="399.2" width="6.2" height="0.9" fill="#F5E6C8"/><path fill="none" stroke="#1e1e1e" stroke-width="1" d="M1090.5 417.5L1094.5 422L1090.5 426.5Z"/><path fill="#DCB67A" d="M1110.0 418.5L1113.5 416.0H1123.0V427.0H1110.0Z"/><rect x="1115.5" y="417.2" width="6.2" height="0.9" fill="#F5E6C8"/><path fill="none" stroke="#1e1e1e" stroke-width="1" d="M1090.5 435.5L1094.5 440L1090.5 444.5Z"/><path fill="#DCB67A" d="M1110.0 436.5L1113.5 434.0H1123.0V445.0H1110.0Z"/><rect x="1115.5" y="435.2" width="6.2" height="0.9" fill="#F5E6C8"/><path fill="#fff" d="M1109.0 454.5L1113.0 451.0H1124.0V464.0H1109.0Z"/><path fill="#DCB67A" d="M1110.0 455.0L1113.5 452.5H1123.0V463.0H1110.0Z"/><rect x="1115.5" y="453.5" width="6.2" height="0.9" fill="#F5E6C8"/><path fill="none" stroke="#1e1e1e" stroke-width="1" d="M1090.5 471.5L1094.5 476L1090.5 480.5Z"/><path fill="#DCB67A" d="M1110.0 472.5L1113.5 470.0H1123.0V481.0H1110.0Z"/><rect x="1115.5" y="471.2" width="6.2" height="0.9" fill="#F5E6C8"/><path fill="none" stroke="#1e1e1e" stroke-width="1" d="M1090.5 489.5L1094.5 494L1090.5 498.5Z"/><path fill="#DCB67A" d="M1110.0 490.5L1113.5 488.0H1123.0V499.0H1110.0Z"/><rect x="1115.5" y="489.2" width="6.2" height="0.9" fill="#F5E6C8"/><path fill="none" stroke="#1e1e1e" stroke-width="1" d="M1090.5 507.5L1094.5 512L1090.5 516.5Z"/><path fill="#DCB67A" d="M1110.0 508.5L1113.5 506.0H1123.0V517.0H1110.0Z"/><rect x="1115.5" y="507.2" width="6.2" height="0.9" fill="#F5E6C8"/><path fill="none" stroke="#1e1e1e" stroke-width="1" d="M1090.5 525.5L1094.5 530L1090.5 534.5Z"/><path fill="#DCB67A" d="M1110.0 526.5L1113.5 524.0H1123.0V535.0H1110.0Z"/><rect x="1115.5" y="525.2" width="6.2" height="0.9" fill="#F5E6C8"/><path fill="none" stroke="#1e1e1e" stroke-width="1" d="M1090.5 543.5L1094.5 548L1090.5 552.5Z"/><path fill="#DCB67A" d="M1110.0 544.5L1113.5 542.0H1123.0V553.0H1110.0Z"/><rect x="1115.5" y="543.2" width="6.2" height="0.9" fill="#F5E6C8"/></svg>
</div>
<div class="a" style="left:1317px;top:158px;width:17px;height:385px;background:#E8E8EC"></div>
<svg class="a" style="left:1317px;top:158px" width="17" height="385" viewBox="1317 158 17 385"><path fill="#868999" d="M1321 172L1325.5 167.5L1330 172Z"/><rect x="1321" y="177" width="9" height="270" fill="#C2C3C9"/><path fill="#868999" d="M1321 531L1325.5 535.5L1330 531Z"/></svg>
<div class="a" style="left:1059px;top:543px;width:276px;height:20px;background:#293955"></div>
<div class="a" style="left:1059px;top:543px;width:100px;height:20px;background:#fff"></div>
<div class="a" style="left:1159px;top:543px;width:150px;height:20px;background:#4D6082"></div>
<div class="t" style="left:1065px;top:546px">Solution Explorer</div>
<div class="t" style="left:1166px;top:546px;color:#fff;letter-spacing:-0.3px">Team Explorer</div>
<div class="t" style="left:1249px;top:546px;color:#fff;letter-spacing:-0.3px">Class View</div>
<div class="a" style="left:1059px;top:571px;width:276px;height:138px;background:#fff;border:1px solid #8C9BB9"></div>
<div class="a" style="left:1060px;top:572px;width:274px;height:19px;background:#4D6082"></div>
<div class="t" style="left:1065px;top:575px;color:#fff">Properties</div>
<svg class="a" style="left:1286px;top:575px" width="50" height="14" viewBox="1286 575 50 14"><path fill="#fff" d="M1288 580H1296L1292 584Z"/><path fill="none" stroke="#fff" stroke-width="1.2" d="M1304.5 576.5H1308.5V582.5H1304.5Z M1303 582.5H1310M1306.5 582.5V587"/><path fill="none" stroke="#fff" stroke-width="1.3" d="M1319 577L1327.5 585.5M1327.5 577L1319 585.5"/></svg>
<div class="t" style="left:1066px;top:597px;font-weight:bold">Model</div>
<div class="t" style="left:1107px;top:597px">Folder Properties</div>
<svg class="a" style="left:1320px;top:600px" width="12" height="8"><path fill="#1e1e1e" d="M3.5 3.5H8.5L6 6Z"/></svg>
<div class="a" style="left:1060px;top:617px;width:274px;height:25px;background:#CFD6E5"></div>
<svg class="a" style="left:1060px;top:617px" width="274" height="45" viewBox="1060 617 274 45">
<rect x="1063.5" y="618.5" width="22" height="21" fill="#FFF0B3" stroke="#E5C365"/>
<g fill="#1e1e1e"><rect x="1067" y="622" width="4" height="4"/><rect x="1067" y="631" width="4" height="4"/><rect x="1072.5" y="622" width="8" height="1"/><rect x="1072.5" y="624" width="8" height="1"/><rect x="1072.5" y="626" width="8" height="1"/><rect x="1072.5" y="628" width="8" height="1"/><rect x="1072.5" y="631" width="8" height="1"/><rect x="1072.5" y="633" width="6" height="1"/><rect x="1079" y="634" width="2" height="1"/></g>
<g fill="#fff"><rect x="1068.5" y="623" width="1" height="2"/><rect x="1067.8" y="623.5" width="2.4" height="1"/><rect x="1068.5" y="632" width="1" height="2"/><rect x="1067.8" y="632.5" width="2.4" height="1"/></g>
<rect x="1090.2" y="622" width="6.7" height="6.8" fill="#2a2a2a"/><text x="1091.1" y="628" font-family="Liberation Sans" font-weight="bold" font-size="7" fill="#fff">A</text><text x="1090.6" y="636" font-family="Liberation Sans" font-weight="bold" font-size="7.2" fill="#2a2a2a">Z</text>
<path fill="none" stroke="#00539C" stroke-width="1.8" d="M1101.2 624.5V631"/><path fill="#00539C" d="M1098.3 629.2H1104L1101.2 634.2Z"/>
<rect x="1112" y="621" width="1" height="17" fill="#8592AC"/>
<path fill="#A8ADB9" d="M1120 634.5L1126 628.5C1125.3 626 1126.5 623 1130 622.5L1128.5 625L1129.7 626.6L1132.3 625.2C1132.5 628.5 1129.5 630.3 1127.3 629.8L1121.5 635.8Z"/>
<rect x="1060" y="642" width="274" height="20" fill="#EEEEF2"/>
<rect x="1063.5" y="647.5" width="8" height="8" fill="#fff" stroke="#1e1e1e"/><rect x="1065.5" y="651" width="4" height="1" fill="#1e1e1e"/>
<rect x="1316" y="642" width="17" height="20" fill="#E8E8EC"/>
<path fill="#868999" d="M1321 652.5L1325 649L1329 652.5Z"/><path fill="#868999" d="M1321 658.5H1329L1325 661.5Z"/>
</svg>
<div class="t" style="left:1079px;top:646px;font-weight:bold">Misc</div>
<div class="t" style="left:1066px;top:669px;font-weight:bold">Misc</div>
<div class="a" style="left:1074px;top:660px;font-size:19.6px;line-height:24px;color:rgba(120,120,120,0.42)">Activate Windows</div>
<div class="a" style="left:1073px;top:685px;font-size:15px;line-height:17px;color:rgba(120,120,120,0.42)">Go to Settings to activate Windows.</div>
<div class="a" style="left:0;top:715px;width:1366px;height:23px;background:#007ACC"></div>
<div class="t" style="left:4px;top:720px;color:#fff">Ready</div>
<div class="t" style="left:606px;top:720px;color:#fff">Ln 12</div>
<div class="t" style="left:698px;top:720px;color:#fff">Col 33</div>
<div class="t" style="left:790px;top:720px;color:#fff">Ch 33</div>
<div class="t" style="left:926px;top:720px;color:#fff">INS</div>
<div class="t" style="left:1298px;top:720px;color:#fff">Publish</div>
<svg class="a" style="left:1275px;top:718px" width="80" height="18" viewBox="1275 718 80 18"><path fill="none" stroke="#fff" stroke-width="1.6" d="M1283.5 732.5V722.5M1279.5 726.5L1283.5 722.3L1287.5 726.5"/><path fill="#fff" d="M1343 729H1351L1347 725Z"/></svg>
<div class="a" style="left:0;top:738px;width:1366px;height:30px;background:linear-gradient(90deg,#050505 0px,#050505 440px,#0d1013 520px,#101418 600px,#0b0c0e 680px,#121214 760px,#100d0b 830px,#17100b 920px,#1b110b 1040px,#160e09 1180px,#120b08 1366px)"></div>
<div class="a" style="left:259px;top:738px;width:36px;height:30px;background:#333333"></div>
<svg class="a" style="left:0;top:738px" width="1366" height="30" viewBox="0 738 1366 30">
<g fill="#fff"><path d="M10 747L17 746V752H10Z"/><path d="M18 745.9L26 745V752H18Z"/><path d="M10 753H17V760L10 759Z"/><path d="M18 753H26V761L18 760.1Z"/></g>
<circle cx="56.5" cy="750.8" r="4.6" fill="none" stroke="#fff" stroke-width="1.3"/><path stroke="#fff" stroke-width="1.5" d="M53.2 754.2L46.5 760.5"/>
<g fill="none" stroke="#fff" stroke-width="1.2"><path d="M84 746.8H96V759.4H84Z"/><path d="M81 749V757.5M99 749V757.5"/></g>
<path fill="#E8B230" d="M121 747H127L128.5 748.5H137V760H121Z"/><path fill="#F8D775" d="M121 750.5H137V760H121Z"/><path fill="#2B79C2" d="M125 755H133V760H131V757H127V760H125Z"/>
<circle cx="166.2" cy="753" r="7" fill="#DB4437"/><path fill="#0F9D58" d="M166.2 753L159.4 751.5A7 7 0 0 0 165.5 760Z"/><path fill="#F4B400" d="M166.2 753L165.5 760A7 7 0 0 0 172.8 750.5Z"/><circle cx="166.2" cy="753" r="3.2" fill="#fff"/><circle cx="166.2" cy="753" r="2.4" fill="#4285F4"/>
<circle cx="202.8" cy="753.5" r="7.4" fill="#1B3A6B"/><circle cx="202.8" cy="753.5" r="6.6" fill="#2A5C95"/><circle cx="205.5" cy="751.2" r="2.6" fill="none" stroke="#fff" stroke-width="1.2"/><circle cx="199.5" cy="756.5" r="1.6" fill="#fff"/><path stroke="#fff" stroke-width="1.4" d="M199.5 756.5L204.2 752.5M195.4 754.5L199.5 756.5"/>
<path fill="#F2F2F2" d="M234.2 746H242.5L246.4 750V761H234.2Z"/><path fill="#C8C8C8" d="M242.5 746V750H246.4Z"/>
<g transform="translate(270.2 746.6) scale(0.7) translate(-12 -7)"><path fill="#fff" stroke="#68217A" stroke-width="2.4" stroke-linejoin="round" d="M27.3 7L31.9 9.3V24.8L27.3 27L18.8 19.4L13.8 22.9L12 21.8V12.2L13.8 11.1L18.8 14.6Z"/><path fill="#68217A" d="M13.9 13.8L17 17L13.9 20.3ZM26.8 13.2L21.9 17L26.8 21Z"/></g>
<g fill="#99C9EF"><rect x="189" y="766" width="21" height="2"/><rect x="211" y="766" width="5.5" height="2"/><rect x="226" y="766" width="28" height="2"/><rect x="259" y="766" width="36" height="2"/></g>
<path fill="none" stroke="#fff" stroke-width="1.3" d="M1186.5 755.6L1192.3 749.4L1198.2 755.6"/>
<g fill="#fff"><path d="M1212 747L1215 749L1212 751L1209.3 749Z"/><path d="M1219.5 747L1222.4 749L1219.5 751L1216.8 749Z"/><path d="M1212 751.2L1215 753.2L1212 755.2L1209.3 753.2Z"/><path d="M1219.5 751.2L1222.4 753.2L1219.5 755.2L1216.8 753.2Z"/><path d="M1213 755.6L1215.8 757.4L1213 759.2Z"/></g>
<circle cx="1220" cy="757" r="3.2" fill="#2DBE48"/><path fill="none" stroke="#fff" stroke-width="1" d="M1218.3 757L1219.6 758.3L1221.9 755.8"/>
<g fill="none" stroke="#fff" stroke-width="1.1"><path d="M1237 751H1248V756.5H1237Z"/><path d="M1232.7 747.5H1236V751M1232.7 747.5V759.3M1242.5 756.5V759.3M1239.5 759.3H1245.5"/></g>
<path fill="#fff" d="M1325 745.5H1341.3V757H1335.5L1333 760.5L1330.5 757H1325Z"/><g fill="#1e1e1e"><rect x="1328" y="748.5" width="10" height="1.2"/><rect x="1328" y="751" width="10" height="1.2"/><rect x="1328" y="753.5" width="7" height="1.2"/></g>
<rect x="1361" y="738" width="1" height="30" fill="#3A3A3A"/>
</svg>
<div class="a" style="left:1262px;top:746px;font-size:12px;line-height:14px;color:#fff;letter-spacing:-0.4px">3:39 PM</div>
</body></html>
